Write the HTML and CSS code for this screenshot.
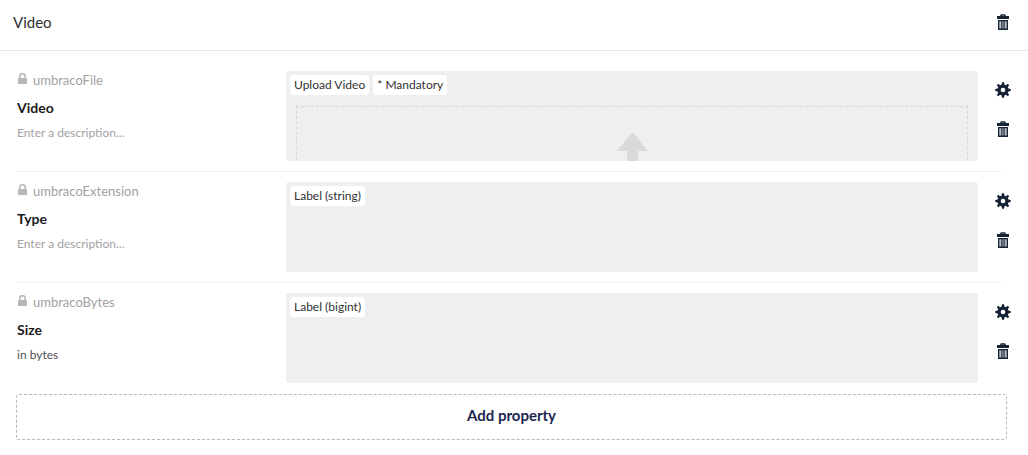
FILE: index.html
```html
<!DOCTYPE html>
<html lang="en">
<head>
<meta charset="utf-8">
<title>Video</title>
<link rel="stylesheet" href="styles.css">
</head>
<body>
<svg class="sprite" aria-hidden="true">
  <symbol id="lock" viewBox="0 0 9 11"><path d="M.5 5h8l.5.5v5l-.5.5h-8l-.5-.5v-5z"/><path d="M1.800 5.500V3.400a2.700 2.700 0 0 1 5.400 0v2.100" fill="none" stroke="currentColor" stroke-width="1.500"/></symbol>
  <symbol id="trash" viewBox="0 0 12 16"><path d="M0 2h3l.8-1.700h4.400L9 2h3v3H0z"/><path d="M4.500 1.300h3v.7h-3z" fill="#6f7883"/><path d="M1 6h10v10H1zM2.500 7.200v7.400h1.200V7.200zm5.800 0v7.400h1.200V7.200z" fill-rule="evenodd"/><path d="M4.600 7.200h1v7.400h-1zM6.400 7.200h1v7.400h-1z" fill="#a4aab2"/></symbol>
  <symbol id="gear" viewBox="0 0 16 16"><path fill-rule="evenodd" d="M7 .3h2l.4 2.300 1.500.6 1.900-1.400 1.400 1.400-1.400 1.900.6 1.500 2.300.4v2l-2.300.4-.6 1.500 1.400 1.900-1.400 1.400-1.900-1.400-1.500.6-.4 2.300H7l-.4-2.300-1.500-.6-1.900 1.400-1.400-1.400 1.400-1.900-.6-1.500L.3 9V7l2.300-.4.6-1.500-1.400-1.900 1.400-1.400 1.900 1.400 1.500-.6zM8 5.700a2.300 2.300 0 1 0 0 4.600 2.300 2.300 0 0 0 0-4.600z"/></symbol>
  <symbol id="arrow" viewBox="0 0 31 40"><path d="M15.500 0L31 19H21v21H10V19H0z"/></symbol>
</svg>
<header class="group-header">
  <h1 class="group-title">Video</h1>
  <button class="icon-button" type="button" aria-label="Delete group"><svg class="trash"><use href="#trash"/></svg></button>
</header>
<main class="group-body">
  <section class="property">
    <div class="meta">
      <div class="alias"><svg class="lock"><use href="#lock"/></svg><span>umbracoFile</span></div>
      <input class="name" aria-label="Property name" value="Video">
      <input class="description" aria-label="Description of Video" placeholder="Enter a description...">
    </div>
    <div class="preview">
      <div class="tags"><span class="tag">Upload Video</span><span class="tag">* Mandatory</span></div>
      <div class="dropzone"><svg class="arrow"><use href="#arrow"/></svg></div>
    </div>
    <div class="actions">
      <button class="icon-button" type="button" aria-label="Video settings"><svg class="gear"><use href="#gear"/></svg></button>
      <button class="icon-button" type="button" aria-label="Delete Video"><svg class="trash"><use href="#trash"/></svg></button>
    </div>
  </section>
  <section class="property">
    <div class="meta">
      <div class="alias"><svg class="lock"><use href="#lock"/></svg><span>umbracoExtension</span></div>
      <input class="name" aria-label="Property name" value="Type">
      <input class="description" aria-label="Description of Type" placeholder="Enter a description...">
    </div>
    <div class="preview">
      <div class="tags"><span class="tag">Label (string)</span></div>
    </div>
    <div class="actions">
      <button class="icon-button" type="button" aria-label="Type settings"><svg class="gear"><use href="#gear"/></svg></button>
      <button class="icon-button" type="button" aria-label="Delete Type"><svg class="trash"><use href="#trash"/></svg></button>
    </div>
  </section>
  <section class="property">
    <div class="meta">
      <div class="alias"><svg class="lock"><use href="#lock"/></svg><span>umbracoBytes</span></div>
      <input class="name" aria-label="Property name" value="Size">
      <input class="description" aria-label="Description of Size" value="in bytes">
    </div>
    <div class="preview">
      <div class="tags"><span class="tag">Label (bigint)</span></div>
    </div>
    <div class="actions">
      <button class="icon-button" type="button" aria-label="Size settings"><svg class="gear"><use href="#gear"/></svg></button>
      <button class="icon-button" type="button" aria-label="Delete Size"><svg class="trash"><use href="#trash"/></svg></button>
    </div>
  </section>
  <button class="add-property" type="button">Add property</button>
</main>
</body>
</html>
```

FILE: styles.css
```css
* { box-sizing: border-box; }
body {
  margin: 0;
  background: #fff;
  color: #303033;
  font-family: Lato, "Liberation Sans", sans-serif;
  font-size: 15px;
}
button, input { font-family: inherit; margin: 0; }
svg { display: block; fill: currentColor; }
.sprite { position: absolute; width: 0; height: 0; }

.group-header {
  display: flex;
  align-items: center;
  justify-content: space-between;
  padding: 12px 14px 18px 13px;
  border-bottom: 1px solid #e9e9eb;
}
.group-title { margin: 0; font-size: 15px; font-weight: 400; line-height: 20px; }
.group-body { padding: 10px 21px 15px 16px; }

.icon-button {
  display: flex;
  align-items: center;
  justify-content: center;
  width: 22px;
  height: 20px;
  padding: 0;
  border: 0;
  background: none;
  color: #162335;
  cursor: pointer;
}
.trash { width: 12px; height: 16px; }
.gear { width: 16px; height: 16px; }

.property {
  display: flex;
  padding: 10px 0;
  border-bottom: 1px solid #f3f3f5;
  margin-right: 5px;
}
.property:last-of-type { border-bottom-color: transparent; }
.meta { flex: 0 0 270px; padding-left: 1px; }
.alias {
  display: flex;
  gap: 6px;
  padding-left: 1px;
  color: #a2a1a6;
  font-size: 13px;
  line-height: 18px;
}
.lock { width: 9px; height: 11px; margin-top: 2px; color: #b8b7bc; }
.name, .description {
  display: block;
  width: 230px;
  height: 20px;
  padding: 0;
  border: 0;
  background: none;
  outline: none;
}
.name { margin-top: 8px; color: #1c1c1e; font-size: 14px; font-weight: 700; }
.description { margin-top: 5px; color: #515054; font-size: 12px; }
.description::placeholder { color: #a2a1a6; opacity: 1; }

.preview {
  flex: 1;
  height: 90px;
  padding: 4px;
  overflow: hidden;
  border-radius: 3px;
  background: #efefef;
}
.tags { display: flex; gap: 4px; }
.tag {
  padding: 0 4px;
  border-radius: 3px;
  background: #fff;
  color: #303033;
  font-size: 12px;
  line-height: 20px;
}
.dropzone {
  display: flex;
  justify-content: center;
  height: 120px;
  margin: 11px 6px 0;
  padding-top: 25px;
  border: 1px dashed #d8d7d9;
}
.arrow { width: 31px; height: 40px; color: #dadada; }
.actions {
  display: flex;
  flex-direction: column;
  gap: 19px;
  width: 22px;
  margin: 9px -12px 0 14px;
}
.add-property {
  display: block;
  width: 100%;
  height: 46px;
  padding: 0 0 4px;
  border: 1px dashed #b8b7bc;
  border-radius: 3px;
  background: none;
  color: #1b264f;
  font-size: 15px;
  font-weight: 700;
  cursor: pointer;
}
```
